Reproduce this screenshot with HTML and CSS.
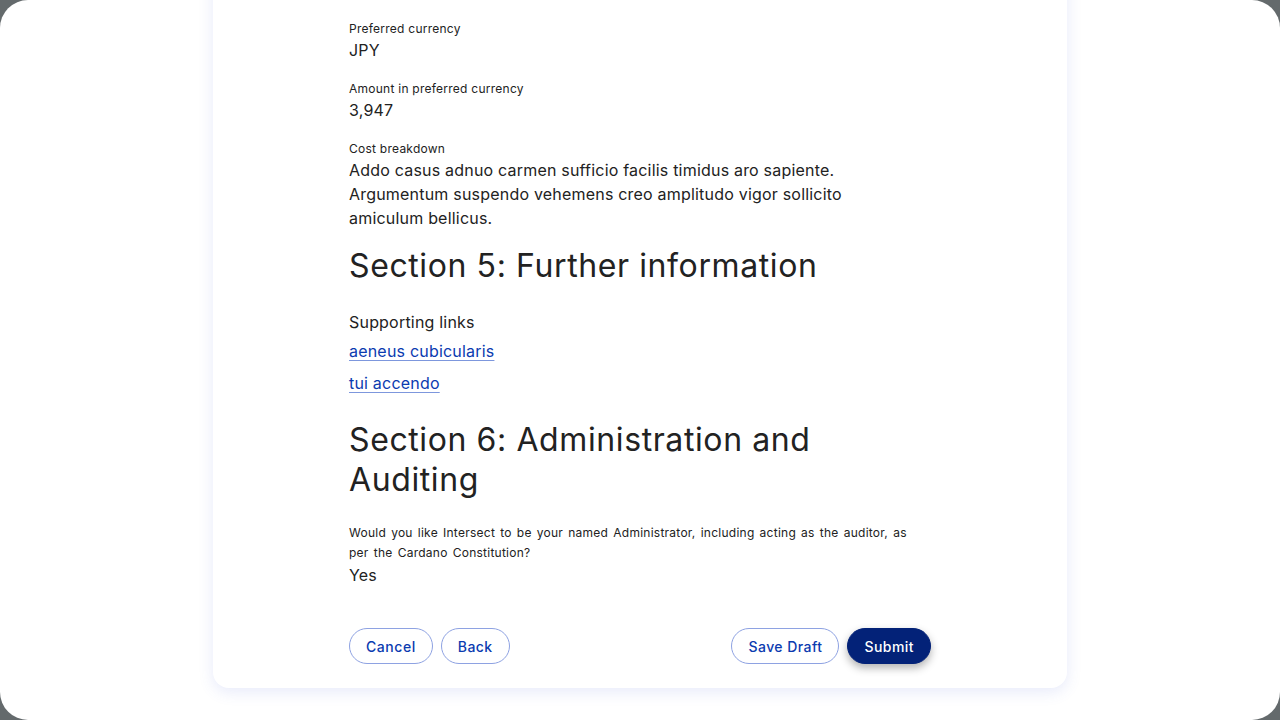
FILE: index.html
```html
<!DOCTYPE html>
<html lang="en">
<head>
<meta charset="utf-8">
<title>Review submission</title>
<link rel="stylesheet" href="styles.css">
</head>
<body>
<div class="screen">
  <main class="card">
    <div class="field">
      <div class="label">Preferred currency</div>
      <div class="value">JPY</div>
    </div>
    <div class="field">
      <div class="label">Amount in preferred currency</div>
      <div class="value">3,947</div>
    </div>
    <div class="field">
      <div class="label">Cost breakdown</div>
      <p class="value paragraph">Addo casus adnuo carmen sufficio facilis timidus aro sapiente. Argumentum suspendo vehemens creo amplitudo vigor sollicito amiculum bellicus.</p>
    </div>

    <h2 class="section-title">Section 5: Further information</h2>
    <div class="links-block">
      <div class="sub-label">Supporting links</div>
      <a class="link" href="#">aeneus cubicularis</a>
      <a class="link" href="#">tui accendo</a>
    </div>

    <h2 class="section-title second">Section 6: Administration and Auditing</h2>
    <div class="field question">
      <div class="label long">Would you like Intersect to be your named Administrator, including acting as the auditor, as per the Cardano Constitution?</div>
      <div class="value">Yes</div>
    </div>

    <div class="actions">
      <div class="group">
        <button class="btn outline btn-cancel">Cancel</button>
        <button class="btn outline">Back</button>
      </div>
      <div class="group">
        <button class="btn outline">Save Draft</button>
        <button class="btn primary">Submit</button>
      </div>
    </div>
  </main>
</div>
</body>
</html>
```
FILE: styles.css
```css
html, body {
  margin: 0;
  padding: 0;
  height: 100%;
  background: #646a6c;
}

.screen {
  height: 720px;
  background: #ffffff;
  border-radius: 28px;
  overflow: hidden;
  display: flex;
  flex-direction: column;
  align-items: center;
  justify-content: flex-end;
  padding-bottom: 32px;
  box-sizing: border-box;
  font-family: Inter, "Noto Sans", sans-serif;
  color: #222222;
}

.card {
  width: 854px;
  box-sizing: border-box;
  flex-shrink: 0;
  background: #ffffff;
  border-radius: 16px;
  box-shadow: 0 4px 15px rgba(72, 92, 220, 0.13);
  padding: 61px 136px 24px;
  display: flex;
  flex-direction: column;
}

.field {
  display: flex;
  flex-direction: column;
  margin-bottom: 16px;
}

.label {
  font-size: 12px;
  line-height: 20px;
  letter-spacing: 0.25px;
  color: #222222;
  transform: translateY(1px);
}

.label.long {
  max-width: 575px;
  word-spacing: 1.5px;
  transform: none;
}

.value {
  font-size: 16px;
  line-height: 24px;
  letter-spacing: 0.2px;
  margin: 0;
}

.paragraph {
  max-width: 525px;
}

.section-title {
  margin: 0;
  font-size: 32px;
  line-height: 40px;
  font-weight: 400;
  letter-spacing: 0.6px;
  color: #222222;
}

.links-block {
  display: flex;
  flex-direction: column;
  align-items: flex-start;
  margin-top: 24px;
}

.sub-label {
  font-size: 16px;
  line-height: 24px;
  letter-spacing: 0.2px;
  margin-bottom: 5px;
}

.link {
  font-size: 16px;
  line-height: 24px;
  letter-spacing: 0.2px;
  color: #0b3bb0;
  text-decoration: underline;
  text-decoration-color: #7d97dd;
  text-underline-offset: 3px;
  margin-bottom: 8px;
}

.section-title.second {
  margin-top: 17px;
}

.question {
  margin-top: 23px;
  margin-bottom: 0;
}

.actions {
  display: flex;
  justify-content: space-between;
  margin-top: 41px;
}

.group {
  display: flex;
  gap: 8px;
}

.btn {
  height: 36px;
  padding: 0 16px;
  border-radius: 18px;
  font-family: Inter, "Noto Sans", sans-serif;
  font-size: 14px;
  font-weight: 500;
  letter-spacing: 0.45px;
  cursor: pointer;
}

.btn-cancel {
  letter-spacing: 0.55px;
}

.btn.outline {
  background: #ffffff;
  border: 1px solid #8ea2e2;
  color: #0b3bb0;
}

.btn.primary {
  background: #032278;
  border: 1px solid #032278;
  color: #ffffff;
  box-shadow: 0 4px 8px rgba(0, 0, 0, 0.3);
}
```
